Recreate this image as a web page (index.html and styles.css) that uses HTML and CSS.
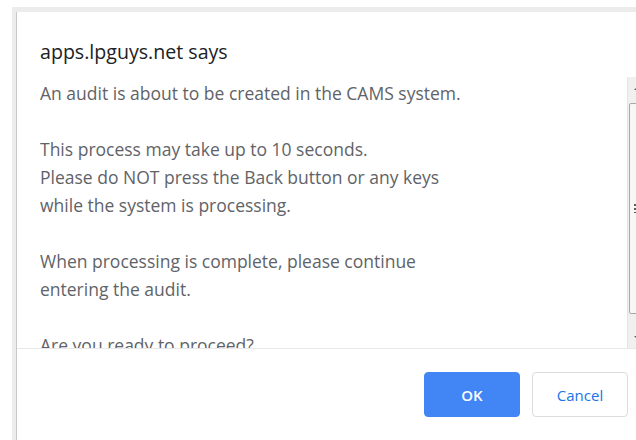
FILE: index.html
```html
<!DOCTYPE html>
<html>
<head>
<meta charset="utf-8">
<link rel="stylesheet" href="styles.css">
</head>
<body>
<div class="dialog">
  <div class="title">apps.lpguys.net says</div>
  <div class="content">
    <div class="message">
      <p>An audit is about to be created in the CAMS system.</p>
      <p>This process may take up to 10 seconds.<br>Please do NOT press the Back button or any keys<br>while the system is processing.</p>
      <p>When processing is complete, please continue<br>entering the audit.</p>
      <p>Are you ready to proceed?</p>
    </div>
    <div class="scrollbar">
      <div class="sb-up"><span class="arrow-up"></span></div>
      <div class="sb-thumb"><span class="grip"></span></div>
      <div class="sb-track"></div>
      <div class="sb-down"><span class="arrow-down"></span></div>
    </div>
  </div>
  <div class="footer">
    <button class="btn btn-ok">OK</button>
    <button class="btn btn-cancel">Cancel</button>
  </div>
</div>
</body>
</html>
```
FILE: styles.css
```css
html, body {
  margin: 0;
  padding: 0;
  background: #fff;
  overflow: hidden;
}

body {
  font-family: "Open Sans", "Noto Sans", sans-serif;
}

.dialog {
  margin: 12px 0 0 16px;
  width: 660px;
  height: 440px;
  background: #fff;
  border-left: 1px solid #c8c8c8;
  box-shadow: -4px -5px 0 0 #ececec;
  box-sizing: border-box;
}

.title {
  padding: 27px 0 0 23px;
  font-size: 19.6px;
  line-height: 26px;
  color: #202124;
  height: 41px;
  box-sizing: border-box;
}

.content {
  display: flex;
  height: 271px;
  margin-top: 24px;
  border-bottom: 1px solid #e8e8e8;
}

.message {
  width: 610px;
  padding: 2px 0 0 23px;
  box-sizing: border-box;
  overflow: hidden;
  font-size: 17.5px;
  line-height: 28px;
  color: #5f6368;
}

.message p {
  margin: 0 0 28px;
}

.scrollbar {
  width: 17px;
  display: flex;
  flex-direction: column;
  background: #f0f0f0;
  border-left: 1px solid #e4e4e4;
}

.sb-up, .sb-down {
  height: 22px;
  display: flex;
  align-items: center;
  justify-content: center;
}

.sb-up { margin-bottom: 4px; }

.arrow-up {
  border-left: 3px solid transparent;
  border-right: 3px solid transparent;
  border-bottom: 3px solid #606060;
}

.arrow-down {
  border-left: 3px solid transparent;
  border-right: 3px solid transparent;
  border-top: 3px solid #606060;
}

.sb-thumb {
  height: 211px;
  margin-left: 1px;
  background: #f7f7f7;
  border: 1px solid #a8a8a8;
  border-radius: 2px;
  box-sizing: border-box;
  display: flex;
  align-items: center;
  justify-content: center;
}

.grip {
  width: 6px;
  height: 9px;
  background: repeating-linear-gradient(#5c5c5c 0 2px, transparent 2px 4px);
}

.sb-track { flex: 1; }

.footer {
  display: flex;
  gap: 12px;
  padding: 23px 0 0 407px;
}

.btn {
  font-family: "Open Sans", "Noto Sans", sans-serif;
  font-size: 15px;
  font-weight: 600;
  width: 96px;
  height: 45px;
  border-radius: 4px;
  box-sizing: border-box;
  cursor: pointer;
}

.btn-ok {
  background: #4285f4;
  border: 1px solid #4285f4;
  color: #fff;
}

.btn-cancel {
  background: #fff;
  border: 1px solid #dadce0;
  color: #1a73e8;
  font-weight: 500;
}
```
